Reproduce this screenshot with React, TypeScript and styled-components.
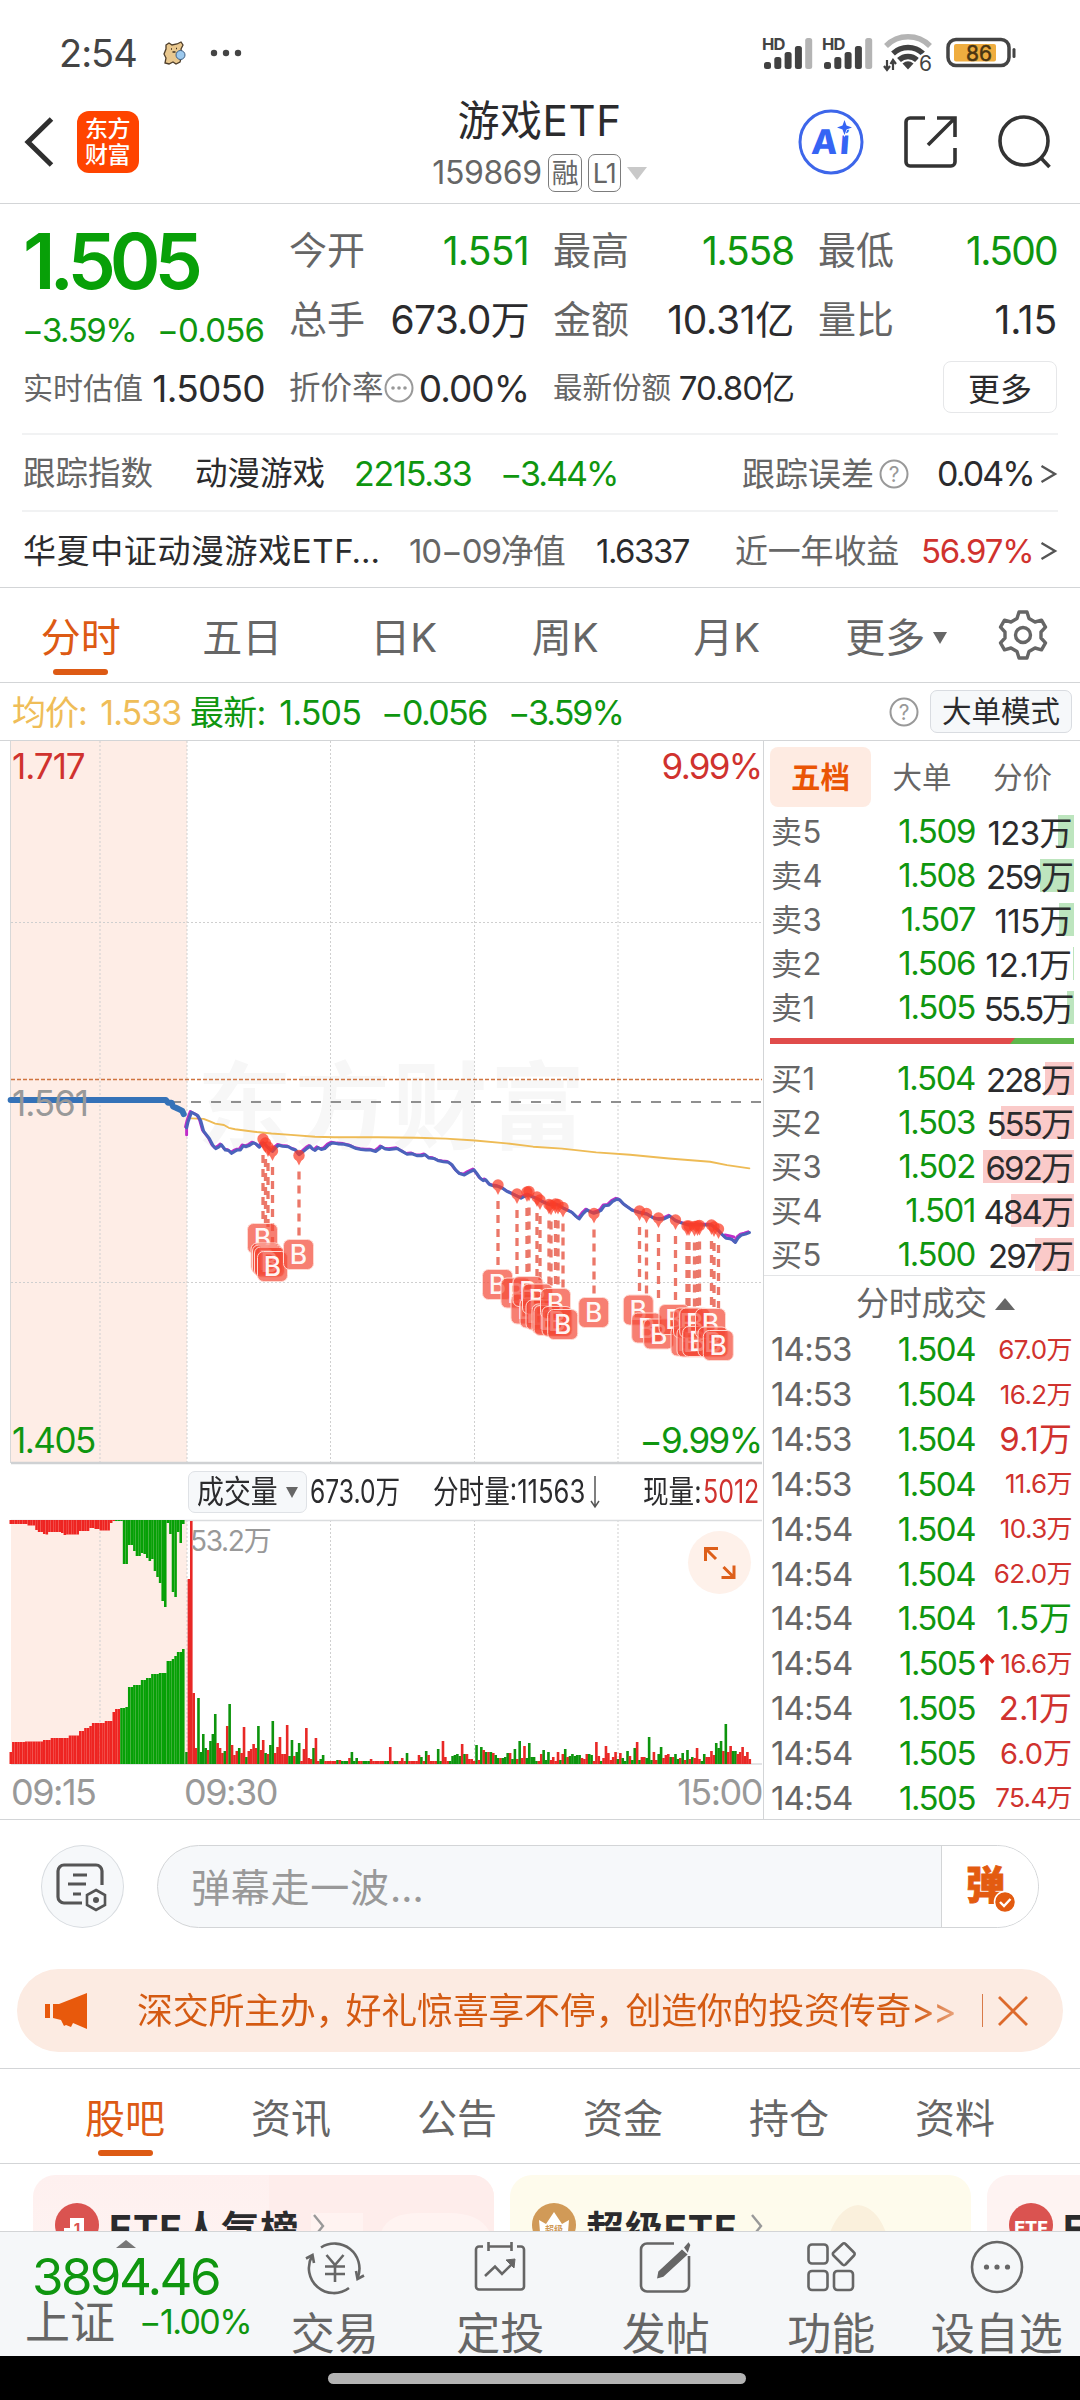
import React from "react";
import styled, { createGlobalStyle, css } from "styled-components";

const C = {
  green: "#0f960f",
  red: "#d0322e",
  orange: "#dd5a14",
  ink: "#2b2b2d",
  label: "#666666",
  faint: "#999999",
  line: "#d3d5d7",
  hair: "#f1f2f3",
  wash: "#f6f8fa",
  blush: "#feede6",
};

const Global = createGlobalStyle`
  * { box-sizing: border-box; }
  body {
    margin: 0;
    background: #fff;
    font-family: "Inter", "Noto Sans CJK SC", sans-serif;
    line-height: 1;
    color: ${C.ink};
  }
  svg { display: block; flex: none; overflow: visible; }
`;

const Page = styled.div`
  width: 1080px;
  height: 2400px;
  display: flex;
  flex-direction: column;
  overflow: hidden;
  background: #fff;
  white-space: nowrap;
`;

/* ---------- text kinds ---------- */
type Txt = { $c?: string; $s?: number; $ls?: number };
const Label = styled.span<Txt>`
  font-size: ${(p) => p.$s ?? 38}px;
  letter-spacing: ${(p) => p.$ls ?? 0}px;
  color: ${(p) => p.$c ?? C.label};
`;
const Value = styled.span<Txt>`
  font-size: ${(p) => p.$s ?? 39}px;
  letter-spacing: ${(p) => p.$ls ?? -1}px;
  color: ${(p) => p.$c ?? C.ink};
`;

/* ---------- status bar ---------- */
const StatusBar = styled.header`
  height: 80px;
  padding: 25px 64px 0 59px;
  display: flex;
  justify-content: space-between;
`;
const StatusSide = styled.div`
  display: flex;
  align-items: center;
  height: 55px;
`;
const Clock = styled.span`
  font-size: 38px;
  letter-spacing: -1px;
  color: #444;
  width: 104px;
`;
const Gap = styled.i<{ $w: number }>`
  flex: none;
  width: ${(p) => p.$w}px;
`;

const Signal = () => (
  <svg width="60" height="36" viewBox="0 0 60 36">
    <text x="0" y="14.500" fontSize="16.500" fontWeight="700" fill="#444" letterSpacing="-0.800">HD</text>
    {[27, 22, 17, 11, 3].map((y, i) => (
      <rect key={i} x={2 + i * 10.3} y={y} width="7" height={34 - y} rx="2.500" fill={i === 4 ? "#b4b4b4" : "#414141"} />
    ))}
  </svg>
);
const Wifi = () => (
  <svg width="50" height="38" viewBox="0 0 50 38">
    <g fill="none" strokeWidth="5.500">
      <path d="M2 12A31 31 0 0 1 46 12" stroke="#b4b4b4" />
      <path d="M9 19.5A22 22 0 0 1 39 19.5" stroke="#414141" />
      <path d="M15 26A13 13 0 0 1 33 26" stroke="#414141" />
    </g>
    <path d="M18.500 29.500Q24 25 29.500 29.500L24 35.500Z" fill="#414141" />
    <path d="M3 26v9M0 32l3 4 3-4M9 36v-9M6.500 30L9 26l3 4" stroke="#414141" strokeWidth="2.200" fill="none" />
    <text x="35" y="37" fontSize="21" fill="#444" stroke="#fff" strokeWidth="4" paintOrder="stroke">6</text>
  </svg>
);
const Battery = () => (
  <svg width="70" height="32" viewBox="0 0 70 32">
    <rect x="2" y="2.500" width="61" height="26" rx="8" fill="#fff" stroke="#444" strokeWidth="3.500" />
    <rect x="8" y="7" width="42" height="17.500" rx="2" fill="#efad3f" />
    <rect x="66.500" y="11" width="3" height="10" rx="1.500" fill="#444" />
    <text x="33" y="23.500" fontSize="21" fill="#4a3512" stroke="#4a3512" strokeWidth="0.500" textAnchor="middle">86</text>
  </svg>
);
const Bear = () => (
  <svg width="24" height="24" viewBox="0 0 24 24">
    <path d="M3 4l3-2 3 2 5-1 4-2 2 3-2 4 1 6-2 7-4 2-3-2-4 2-4-1 1-5-2-4 2-5z" fill="#e9c88f" stroke="#4d3d2a" strokeWidth="1.300" />
    <path d="M8 8h1M13 7.500h1M9.500 11h3" stroke="#3f3020" strokeWidth="1.500" />
    <circle cx="17.500" cy="14" r="4.500" fill="#9cc9ee" stroke="#3e5e84" strokeWidth="1" />
  </svg>
);

/* ---------- title bar ---------- */
const TitleBar = styled.div`
  height: 124px;
  padding: 0 29px 0 23px;
  display: grid;
  grid-template-columns: 1fr auto 1fr;
  align-items: center;
  border-bottom: 1px solid ${C.line};
`;
const Side = styled.div<{ $end?: boolean }>`
  display: flex;
  align-items: center;
  gap: ${(p) => (p.$end ? 41 : 23)}px;
  justify-content: ${(p) => (p.$end ? "flex-end" : "flex-start")};
`;
const Logo = styled.div`
  width: 62px;
  height: 62px;
  border-radius: 12px;
  background: #ff4400;
  color: #fff;
  font-size: 23px;
  font-weight: 500;
  line-height: 26px;
  letter-spacing: -0.5px;
  white-space: normal;
  padding: 5px 4px 0 8px;
`;
const TitleCol = styled.div`
  display: flex;
  flex-direction: column;
  align-items: center;
  padding: 11px 0 0 5px;
`;
const Title = styled.h1`
  margin: 0;
  font-size: 42px;
  line-height: 52px;
  font-weight: 400;
  letter-spacing: 0.6px;
`;
const Sub = styled.div`
  display: flex;
  align-items: center;
  gap: 6px;
  height: 53px;
  font-size: 32px;
  letter-spacing: -0.4px;
  color: ${C.label};
`;
const Badge = styled.span<{ $w: number }>`
  width: ${(p) => p.$w}px;
  height: 38px;
  border: 1.500px solid #7c7c7c;
  border-radius: 7px;
  display: grid;
  place-items: center;
  font-size: 27px;
  letter-spacing: -1px;
`;
const Tri = styled.i<{ $w: number; $h: number; $c: string; $up?: boolean }>`
  display: block;
  flex: none;
  width: 0;
  height: 0;
  border: solid transparent;
  border-width: 0 ${(p) => p.$w / 2}px;
  ${(p) =>
    p.$up
      ? css`border-bottom: ${p.$h}px solid ${p.$c};`
      : css`border-top: ${p.$h}px solid ${p.$c};`}
`;

/* ---------- quote panel ---------- */
const Quote = styled.section`
  height: 231px;
  margin: 0 22px;
  padding: 12px 0 0 1px;
  border-bottom: 2px solid ${C.hair};
  display: grid;
  grid-template-columns: 242px 240px 241px 239px;
  grid-template-rows: 68px 70px 68px;
  column-gap: 24px;
`;
const PriceBox = styled.div`
  grid-row: span 2;
  display: flex;
  flex-direction: column;
`;
const BigPrice = styled.div`
  font-size: 77px;
  font-weight: 600;
  letter-spacing: -6px;
  line-height: 91px;
  margin-left: 0;
  color: #08a008;
`;
const Deltas = styled.div`
  display: flex;
  gap: 21px;
  margin-left: -1px;
  line-height: 46px;
`;
const Cell = styled.div`
  display: flex;
  align-items: center;
  justify-content: space-between;
`;
const MoreCell = styled(Cell)`
  justify-content: flex-end;
`;
const MoreButton = styled.button`
  width: 114px;
  height: 52px;
  margin-top: -3px;
  border: 1.500px solid #e6e7e9;
  border-radius: 8px;
  background: #fff;
  font: 32px "Noto Sans CJK SC", sans-serif;
  line-height: 1;
  color: ${C.ink};
  padding: 0;
`;
const InfoLine = styled.section<{ $cols: string; $last?: boolean }>`
  height: ${(p) => (p.$last ? 75 : 77)}px;
  padding: 3px 0 0 1px;
  margin: 0 22px;
  display: grid;
  grid-template-columns: ${(p) => p.$cols};
  align-items: center;
  border-bottom: ${(p) => (p.$last ? "0" : `2px solid ${C.hair}`)};
`;
const WithIcon = styled.span`
  display: flex;
  align-items: center;
`;

const Hint = ({ mark }: { mark: "?" | "…" }) => (
  <svg width="30" height="30" viewBox="0 0 30 30">
    <circle cx="15" cy="15" r="13.500" fill="none" stroke="#999" strokeWidth="2" />
    {mark === "?" ? (
      <text x="15" y="22.500" fontSize="21" fill="#999" textAnchor="middle">?</text>
    ) : (
      [9, 15, 21].map((x) => <circle key={x} cx={x} cy="15" r="1.800" fill="#999" />)
    )}
  </svg>
);
const Arrow = () => (
  <svg width="17" height="20" viewBox="0 0 17 20">
    <path d="M1.500 2L15 10 1.500 18" fill="none" stroke="#555" strokeWidth="2.400" />
  </svg>
);

/* ---------- tabs ---------- */
const Tabs = styled.nav<{ $first?: boolean }>`
  height: 95px;
  display: grid;
  grid-template-columns: ${(p) => (p.$first ? "repeat(6, 161.500px) 1fr" : "repeat(6, 166px)")};
  padding-left: ${(p) => (p.$first ? 0 : 42)}px;
  border-top: 1px solid ${C.line};
`;
const TabItem = styled.div<{ $on?: boolean }>`
  display: flex;
  flex-direction: column;
  align-items: center;
  padding-top: 28px;
  font-size: 40px;
  line-height: 44px;
  color: ${(p) => (p.$on ? C.orange : C.label)};
  &::after {
    content: "";
    width: 55px;
    height: 6px;
    margin-top: 9px;
    border-radius: 3px;
    background: ${(p) => (p.$on ? C.orange : "transparent")};
  }
`;
const TabText = styled.span`
  display: flex;
  align-items: center;
  gap: 8px;
`;
const GearBox = styled.div`
  padding: 22px 0 0 30px;
`;

const AvgBar = styled.section`
  height: 58px;
  padding: 0 8px 0 12px;
  display: flex;
  align-items: center;
  border-top: 1px solid ${C.line};
`;
const AvgItem = styled(Value)<{ $w: number }>`
  width: ${(p) => p.$w}px;
  padding-top: 3px;
  word-spacing: 5px;
`;
const ModeButton = styled.div`
  margin-left: 11px;
  width: 142px;
  height: 43px;
  border: 1.500px solid #d9dce1;
  border-radius: 7px;
  background: ${C.wash};
  display: grid;
  place-items: center;
  font-size: 29.500px;
`;
const Push = styled.span`
  flex: 1;
`;

/* ---------- market area ---------- */
const Market = styled.section`
  height: 1080px;
  display: flex;
  border-top: 1px solid ${C.line};
  border-bottom: 1px solid ${C.line};
`;
const Charts = styled.div`
  width: 763px;
  display: flex;
  flex-direction: column;
`;
const VolHead = styled.div`
  height: 56px;
  padding: 0 0 0 188px;
  display: flex;
  align-items: center;
`;
const VolPick = styled.div`
  width: 119px;
  height: 42px;
  margin-right: 3px;
  border: 1.500px solid #dfe2e6;
  border-radius: 7px;
  background: ${C.wash};
  display: flex;
  align-items: center;
  padding-left: 8px;
`;
const Narrow = styled.span<{ $w: number; $k: number; $c?: string }>`
  width: ${(p) => p.$w}px;
  font-size: 32px;
  color: ${(p) => p.$c ?? C.ink};
  transform: scaleX(${(p) => p.$k});
  transform-origin: left;
`;
const VolBody = styled.div`
  position: relative;
  height: 245px;
`;
const Expand = styled.div`
  position: absolute;
  left: 688px;
  top: 11px;
`;
const Times = styled.div`
  height: 54px;
  display: grid;
  grid-template-columns: 173px 1fr auto;
  padding: 0 1px 0 11px;
  align-items: center;
  font-size: 36px;
  letter-spacing: -1.500px;
  color: ${C.faint};
`;

const BookSide = styled.aside`
  width: 317px;
  border-left: 1px solid ${C.line};
  display: flex;
  flex-direction: column;
`;
const BookTabs = styled.div`
  flex: none;
  height: 68px;
  padding: 6px 0 0 6px;
  display: grid;
  grid-template-columns: 101px 102px 99px;
`;
const BookTab = styled.div<{ $on?: boolean }>`
  height: 60px;
  padding-top: 2px;
  border-radius: 8px;
  display: grid;
  place-items: center;
  font-size: 29.500px;
  font-weight: ${(p) => (p.$on ? 700 : 400)};
  color: ${(p) => (p.$on ? "#ea5504" : C.label)};
  background: ${(p) => (p.$on ? "#feebe2" : "transparent")};
`;
const BookRow = styled.div`
  flex: none;
  height: 44px;
  padding: 0 6px 0 7px;
  display: grid;
  grid-template-columns: 90px 114px 1fr;
  align-items: center;
  text-align: right;
  & > :first-child {
    text-align: left;
  }
`;
const VolCell = styled.span<{ $bar: number; $c: string }>`
  height: 33px;
  line-height: 36px;
  padding-right: 2px;
  background: linear-gradient(${(p) => p.$c}, ${(p) => p.$c}) right / ${(p) => p.$bar}px 100% no-repeat;
`;
const Ratio = styled.div`
  flex: none;
  height: 6px;
  margin: 9px 6px 12px 6px;
  background: #5fb74b;
  &::before {
    content: "";
    display: block;
    width: 245px;
    height: 6px;
    background: #e04c4b;
    clip-path: polygon(0 0, 100% 0, calc(100% - 5px) 100%, 0 100%);
  }
`;
const TradeHead = styled.div`
  flex: none;
  height: 52.500px;
  margin-top: -1px;
  border-top: 1px solid #e3e4e6;
  display: flex;
  align-items: center;
  gap: 8px;
  padding: 4px 0 0 92px;
`;
const TradeRow = styled(BookRow)`
  height: 44.850px;
`;
const Tick = styled.span`
  display: flex;
  align-items: center;
  justify-content: space-between;
  padding-right: 2px;
`;

/* ---------- danmaku + banner ---------- */
const Danmaku = styled.section`
  padding: 25px 41px 0;
  height: 149px;
  display: flex;
  gap: 33px;
`;
const Round = styled.div`
  width: 83px;
  height: 83px;
  border-radius: 50%;
  border: 1.500px solid #d8dce0;
  background: ${C.wash};
  display: grid;
  place-items: center;
`;
const Field = styled.div`
  width: 883px;
  height: 83px;
  border: 1.500px solid ${C.line};
  border-radius: 42px;
  overflow: hidden;
  display: flex;
  background: ${C.wash};
`;
const Placeholder = styled.span`
  flex: 1;
  padding-left: 33px;
  font-size: 39px;
  letter-spacing: 0.800px;
  line-height: 83px;
  color: ${C.faint};
`;
const Send = styled.div`
  width: 97px;
  border-left: 1px solid ${C.line};
  background: #fff;
  padding: 19px 0 0 24px;
`;
const Banner = styled.section`
  margin: 0 17px 16px;
  height: 83px;
  border-radius: 42px;
  background: #fcebe2;
  display: flex;
  align-items: center;
  padding: 0 34px 0 28px;
`;
const BannerText = styled.span`
  margin-left: 49px;
  width: 846px;
  font-size: 36px;
  letter-spacing: -0.300px;
  background: linear-gradient(90deg, #d45a12 0 92%, #e9a57f 97%);
  background-clip: text;
  color: transparent;
  line-height: 50px;
`;
const Comma = styled.span`
  letter-spacing: -6px;
`;
const Chevrons = styled.span`
  letter-spacing: -2px;
`;
const Bar = styled.i`
  width: 1.500px;
  height: 33px;
  background: #d97a48;
  margin-right: 14px;
`;

/* ---------- cards ---------- */
const Cards = styled.section`
  height: 68px;
  border-top: 1px solid ${C.line};
  padding: 11px 0 0 33px;
  display: flex;
  gap: 16px;
  overflow: hidden;
`;
const Card = styled.div<{ $bg: string }>`
  position: relative;
  isolation: isolate;
  flex: none;
  width: 461px;
  height: 160px;
  border-radius: 22px;
  background: ${(p) => p.$bg};
  display: flex;
  align-items: flex-start;
  padding: 28px 0 0 22px;
  overflow: hidden;
`;
const Ghost = styled.div`
  position: absolute;
  z-index: -1;
  right: 0;
  top: 0;
`;
const CardTitle = styled.span`
  font-size: 38px;
  font-weight: 700;
  line-height: 54px;
  margin: -1px 14px 0 10px;
  letter-spacing: 0.900px;
`;

/* ---------- bottom bar ---------- */
const Bottom = styled.nav`
  height: 125px;
  background: #f5f7f9;
  border-top: 1.500px solid ${C.line};
  display: grid;
  grid-template-columns: 252px repeat(5, 165.500px);
  overflow: hidden;
`;
const IndexBox = styled.div`
  display: flex;
  flex-direction: column;
`;
const IndexTri = styled.div`
  padding: 8px 0 0 116px;
  height: 19px;
`;
const IndexValue = styled.div`
  font-size: 51px;
  letter-spacing: -2.600px;
  line-height: 52px;
  padding-left: 32px;
  color: ${C.green};
`;
const IndexRow = styled.div`
  display: flex;
  align-items: center;
  padding-left: 25px;
  height: 38px;
  gap: 24px;
`;
const NavItem = styled.div`
  display: flex;
  flex-direction: column;
  align-items: center;
  padding-top: 8px;
  font-size: 44px;
  color: ${C.label};
  gap: 17px;
  line-height: 46px;
`;
const Home = styled.footer`
  height: 44px;
  background: #000;
  display: flex;
  justify-content: center;
  padding: 17px 6px 0 0;
`;
const Handle = styled.i`
  width: 418px;
  height: 11px;
  border-radius: 6px;
  background: #b3b3b3;
`;

/* ---------- chart data ---------- */
const PRICE =
  "385,843 388,830 395,810 408,817 414,828 420,850 426,858 432,866 439,880 445,887 451,884 457,879 465,890 472,891 478,897 484,893 490,890 496,890 502,881 508,883 515,880 522,875 528,877 535,884 540,878 545,876 552,884 562,893 570,884 575,880 583,882 595,883 603,888 610,890 617,900 626,893 634,886 640,882 645,888 650,891 656,885 663,889 670,887 678,879 686,875 697,877 710,878 722,881 735,887 745,889 755,890 765,890 775,893 782,888 787,883 795,888 803,889 812,888 820,887 828,892 840,899 850,898 860,902 870,902 877,900 885,907 895,908 905,913 915,915 925,916 933,922 940,932 948,940 958,943 966,938 978,932 984,940 990,949 997,955 1002,953 1010,963 1018,966 1027,967 1037,971 1045,977 1055,982 1067,988 1075,992 1083,988 1090,985 1100,990 1110,994 1120,1000 1133,1006 1150,1006 1165,1015 1180,1022 1188,1030 1195,1036 1203,1025 1211,1017 1218,1021 1225,1024 1232,1022 1240,1018 1247,1008 1256,1007 1264,999 1273,994 1279,996 1287,1005 1295,1011 1305,1018 1320,1023 1335,1026 1348,1034 1358,1037 1370,1036 1382,1030 1394,1040 1407,1045 1420,1049 1440,1049 1468,1049 1482,1060 1490,1069 1498,1077 1506,1078 1511,1080 1517,1086 1523,1076 1530,1070 1538,1068 1546,1065";
const AVERAGE =
  "395,823 420,824 432,829 444,834 462,837 472,843 485,846 530,852 560,855 600,858 650,862 690,863 780,863 860,864 920,866 980,870 1045,876 1100,883 1160,887 1230,895 1300,900 1380,908 1465,915 1500,922 1546,929";

const DOTS: [number, number][] = [
  [263, 1139], [265.5, 1143], [268, 1147], [272.5, 1151], [299, 1155.5],
  [498, 1185], [517, 1194], [527, 1192], [529, 1191.5], [537, 1197], [540, 1200], [549, 1204.5], [551, 1205.5], [555.5, 1204], [558, 1204.5], [563, 1207.5], [594, 1213.5],
  [639.5, 1211], [646.5, 1213.500], [658.5, 1218], [675.5, 1220], [687, 1226], [689, 1226], [694.500, 1226.500], [697.500, 1226], [699.500, 1225.500], [711.500, 1225], [714, 1227], [718.500, 1229],
];
const FLAGS: [number, number][] = [
  [262.5, 1238.5], [266, 1258], [267.5, 1260], [269.5, 1262], [272.5, 1266.5], [298.5, 1254.5],
  [497.5, 1284.5], [516, 1293], [526, 1309], [528, 1291.5], [535, 1313], [537.500, 1299], [541, 1315], [547, 1319], [549, 1320.500], [555.500, 1303.500], [557, 1321.500], [562.700, 1324.500], [593.700, 1312.500],
  [638.300, 1310], [646.700, 1328], [658.700, 1334], [674, 1319.500], [686, 1341], [688.500, 1323], [692, 1342], [694.700, 1323], [697.700, 1341.500], [710.500, 1323.500], [713, 1342], [718.300, 1345.500],
];

const VOLUME =
  "g12 r185 r243 r71 r16 g66 g12 g30 g16 r14 g23 g30 g50 r21 r16 r11 g13 r38 g60 r19 r9 r13 g16 r11 r37 g7 r13 r15 r20 r16 g38 r14 r24 g11 r10 g19 g43 r11 r17 r27 r10 r10 r39 g8 g24 r8 g12 g21 r3 r15 r36 r6 r5 g16 r26 r3 g5 g9 r3 r3 r3 r3 r3 g4 r4 g3 g3 g3 r6 g12 g3 g6 r3 r3 g3 g3 g3 r5 r3 r3 r3 r3 r3 g3 g3 r17 r3 g3 g3 r3 r6 r3 g11 r3 r3 r3 r3 r9 g7 r3 g13 r9 r3 r3 r3 g15 g3 r23 r7 r3 g3 g8 g9 g10 g8 r20 g10 r10 r5 r5 r3 g19 r4 g17 r14 g12 r12 g12 r11 g9 g6 r6 g6 g7 g11 r11 g5 g15 r5 g23 r6 r18 g6 g21 g7 g7 g3 r3 r10 g14 g4 g12 r4 r7 r3 r12 g4 r10 g15 r7 g8 g10 g8 g9 g9 r6 r5 r10 g10 g9 r3 r22 r8 g3 r6 r18 r11 r4 r7 r12 g5 r11 g6 g3 g13 r8 g4 g16 r22 g4 r7 r7 g6 g27 g4 r12 r4 g10 g17 r6 r9 r10 g7 r7 g10 g5 r6 g11 r4 g14 r5 g7 r6 r16 r5 g3 g10 r7 r7 r13 r9 g21 g16 g23 r13 g40 r12 r18 g13 g13 r10 r12 r17 r8 r12 r5".split(" ");

/* auction bars: r/g, number of bars, height */
const expand = (s: string) =>
  s.split(" ").flatMap((t) => {
    const [k, n, h] = t.split(",");
    return Array.from({ length: +n }, () => ({ up: k === "r", h: +h }));
  });
const AUCTION_TOP = expand(
  "r,7,4 r,3,5.5 r,1,10 r,2,12 r,1,14 r,1,14.5 r,5,12 r,1,13 r,1,15 r,5,14.5 r,1,11 r,3,11 r,2,8 r,2,9 r,4,10.5 r,1,3 r,1,1 g,1,1 g,2,1 g,2,44 g,1,25 g,1,25 g,1,31 g,2,36 g,1,33 g,1,34 g,1,38 g,1,41 g,1,39 g,1,51 g,1,57 g,1,63 g,1,81 g,1,87 g,1,3 g,1,14 g,1,72 g,1,77 g,1,12 g,1,23 g,1,4"
);
const AUCTION_BOTTOM = expand(
  "r,1,12 r,5,22 r,7,22.5 r,3,24 r,7,26 r,4,28.5 r,2,33 r,2,36 r,1,38 r,5,41 r,3,43 r,1,52 r,2,55 g,2,56 g,1,57 g,2,77 g,3,79 g,2,84 g,2,86 g,3,90 g,3,91 g,2,103 g,1,105 g,1,108 g,2,112 g,1,115"
);

const RISE = "#ee2421";
const FALL = "#06a006";
const GRID_X = [100, 187, 330.5, 474.5, 618];

const PriceChart = () => (
  <svg width="763" height="723" viewBox="0 0 763 723">
    <rect x="11" y="0" width="176" height="722" fill={C.blush} />
    <text x="197" y="401" fontSize="95" fontWeight="700" textLength="388" fill="#f7f7f7">东方财富</text>
    <g stroke="#cfcfcf" strokeWidth="1" strokeDasharray="2 2">
      {GRID_X.map((x) => <path key={x} d={`M${x} 0V722`} />)}
      <path d="M11 181.500H762M11 541.500H762" />
    </g>
    <path d="M10.500 0V722" stroke="#d8d8d8" />
    <path d="M11 722H762" stroke="#cfd1d3" strokeWidth="2.500" />
    <path d="M11 338.500H762" stroke="#cf7440" strokeWidth="1.500" strokeDasharray="4 2" />
    <path d="M11 361H762" stroke="#8f8f8f" strokeWidth="2" strokeDasharray="10 10" />
    <g transform="translate(0 -11) scale(0.4847 0.4719)" fill="none" strokeLinejoin="round" strokeLinecap="round">
      <polyline points="22,784 342,784 347,790 354,790 357,798 364,801 370,804 376,807 379,814" stroke="#3572b8" strokeWidth="12.500" />
      <polyline points={AVERAGE} stroke="#eebb55" strokeWidth="4" />
      <polyline points={PRICE} stroke="#c02cc8" strokeWidth="5.500" transform="translate(-2.500 -2)" />
      <path d="M385 858V836M1496 1070L1506 1072 1514 1074" stroke="#c02cc8" strokeWidth="6" />
      <polyline points={PRICE} stroke="#4b63bb" strokeWidth="6.500" />
    </g>
    <g fill="#fb3d27">
      {DOTS.map(([x, y], i) => (
        <g key={i} opacity="0.72">
          <circle cx={x} cy={y - 741} r="5.700" />
          <path d={`M${x - 3} ${y - 737}h6l-3 6z`} />
        </g>
      ))}
    </g>
    <g stroke="#e8604f" strokeWidth="3.300" strokeDasharray="8 6" opacity="0.85">
      {DOTS.map(([x, y], i) => <path key={i} d={`M${x} ${y - 725}V${y - 741 + (i === 3 ? 95 : 83)}`} />)}
    </g>
    {FLAGS.map(([x, y], i) => (
      <g key={i}>
        <rect x={x - 15} y={y - 756} width="30" height="30" rx="6" fill="#f44836" fillOpacity="0.7" stroke="#ffd9d2" strokeWidth="1" />
        <text x={x} y={y - 731.5} fontSize="26.500" fontWeight="500" textAnchor="middle" fill="#fff" fillOpacity="0.95">B</text>
      </g>
    ))}
    <text x="12" y="38" fontSize="35" letterSpacing="-1" fill={C.red}>1.717</text>
    <text x="761.500" y="38" fontSize="35" letterSpacing="-1.700" textAnchor="end" fill={C.red}>9.99%</text>
    <text x="12" y="374.500" fontSize="35" letterSpacing="-1" fill="#999">1.561</text>
    <text x="12" y="712" fontSize="35" letterSpacing="-1.500" fill={C.green}>1.405</text>
    <text x="761.500" y="712" fontSize="35" letterSpacing="-1.600" textAnchor="end" fill={C.green}>−9.99%</text>
  </svg>
);

const VolumeChart = () => (
  <svg width="763" height="245" viewBox="0 0 763 245">
    <rect x="11" y="0" width="176" height="244" fill={C.blush} />
    <g stroke="#cfcfcf" strokeDasharray="2 2">
      {GRID_X.map((x) => <path key={x} d={`M${x} 0V244`} />)}
    </g>
    <path d="M11 .5H762M11 244H762" stroke="#dadcde" strokeWidth="1.500" />
    {AUCTION_TOP.map((b, i) => (
      <rect key={i} x={9.5 + i * 2.575} y="0" width="2.550" height={b.h} fill={b.up ? RISE : FALL} />
    ))}
    {AUCTION_BOTTOM.map((b, i) => (
      <rect key={i} x={9.5 + i * 2.575} y={244 - b.h} width="2.550" height={b.h} fill={b.up ? RISE : FALL} />
    ))}
    {VOLUME.map((t, i) => {
      const h = +t.slice(1);
      return <rect key={i} x={185.2 + i * 2.397} y={244 - h} width="2.600" height={h} fill={t[0] === "r" ? "#e82826" : "#0d940d"} />;
    })}
    <text x="190" y="31" fontSize="28" letterSpacing="-1.300" fill="#999">53.2万</text>
  </svg>
);

/* ---------- order book ---------- */
const ASKS: [string, string, string, number][] = [
  ["卖5", "1.509", "123万", 16], ["卖4", "1.508", "259万", 34], ["卖3", "1.507", "115万", 15], ["卖2", "1.506", "12.1万", 1], ["卖1", "1.505", "55.5万", 7],
];
const BIDS: [string, string, string, number][] = [
  ["买1", "1.504", "228万", 29], ["买2", "1.503", "555万", 73], ["买3", "1.502", "692万", 91], ["买4", "1.501", "484万", 63], ["买5", "1.500", "297万", 39],
];
const TRADES: [string, string, string, number, boolean?][] = [
  ["14:53", "1.504", "67.0万", 26], ["14:53", "1.504", "16.2万", 26], ["14:53", "1.504", "9.1万", 33], ["14:53", "1.504", "11.6万", 26],
  ["14:54", "1.504", "10.3万", 26], ["14:54", "1.504", "62.0万", 26], ["14:54", "1.504", "1.5万", 33], ["14:54", "1.505", "16.6万", 26, true],
  ["14:54", "1.505", "2.1万", 33], ["14:54", "1.505", "6.0万", 29], ["14:54", "1.505", "75.4万", 26],
];

const spacing = (v: string) => {
  const narrow = v[0] === "1";
  if (v.includes(".")) return narrow ? 0 : -2.6;
  return narrow ? -0.6 : -1.9;
};

const Book = ({ rows, tint }: { rows: typeof ASKS; tint: string }) => (
  <>
    {rows.map(([n, p, v, b]) => (
      <BookRow key={n}>
        <Label $s={31} $ls={0.5}>{n}</Label>
        <Value $s={33} $ls={-1.4} $c={C.green}>{p}</Value>
        <VolCell $bar={b} $c={tint}>
          <Value $s={33} $ls={spacing(v)}>{v}</Value>
        </VolCell>
      </BookRow>
    ))}
  </>
);

/* ---------- bottom icons ---------- */
const icon = { width: 60, height: 54, viewBox: "0 0 60 54", fill: "none", stroke: "#666", strokeWidth: 2.6 };
const NAV = [
  {
    t: "交易",
    i: (
      <svg {...icon}>
        <path d="M16 7.500A25 25 0 0 1 53 37M44 48A25 25 0 0 1 7 16" />
        <path d="M1 18.500L7.500 15 9 23M59 35.500L52.500 39 51 31" />
        <path d="M21.500 15l8.500 10 8.500-10M30 25v17M20 26.500h20M20 34h20" />
      </svg>
    ),
  },
  {
    t: "定投",
    i: (
      <svg {...icon}>
        <path d="M13 6.500H9a3 3 0 0 0-3 3v37a3 3 0 0 0 3 3h42a3 3 0 0 0 3-3v-37a3 3 0 0 0-3-3h-4M18.500 2v9M41.500 2v9M18.500 6.500h23" />
        <path d="M15 36l10-9.500 7 7.500L44 22" />
        <path d="M36 20l9-1-1 9z" fill="#666" strokeWidth="1" />
      </svg>
    ),
  },
  {
    t: "发帖",
    i: (
      <svg {...icon}>
        <path d="M38 3.500H11a6 6 0 0 0-6 6v36a6 6 0 0 0 6 6h36a6 6 0 0 0 6-6V16" />
        <path d="M46 10.500L50.500 14.500 27 36l-5 1.500L23 32z" fill="#666" strokeWidth="1.500" />
        <path d="M49 7.500l3.500-4 1 1.500-2 6z" fill="#666" strokeWidth="1.500" />
      </svg>
    ),
  },
  {
    t: "功能",
    i: (
      <svg {...icon}>
        <rect x="7.500" y="4.500" width="19" height="19" rx="3.500" />
        <rect x="7.500" y="31" width="19" height="19" rx="3.500" />
        <rect x="33" y="31" width="19" height="19" rx="3.500" />
        <path d="M41.500 4L32.500 12.500a2 2 0 0 0 0 3L41.500 24.500a2 2 0 0 0 3 0L53 15.500a2 2 0 0 0 0-3L44.500 4a2 2 0 0 0-3 0z" />
      </svg>
    ),
  },
  {
    t: "设自选",
    i: (
      <svg {...icon}>
        <circle cx="30" cy="27" r="25" />
        {[19.500, 30, 40.500].map((x) => <circle key={x} cx={x} cy="27" r="2.600" fill="#666" stroke="none" />)}
      </svg>
    ),
  },
];

export default function App() {
  return (
    <Page>
      <Global />
      <StatusBar>
        <StatusSide>
          <Clock>2:54</Clock>
          <Bear />
          <svg width="60" height="10" viewBox="0 0 60 10">
            {[27, 39, 51].map((x) => <circle key={x} cx={x} cy="5" r="3.200" fill="#444" />)}
          </svg>
        </StatusSide>
        <StatusSide>
          <Signal />
          <Signal />
          <Gap $w={2} />
          <Wifi />
          <Gap $w={12} />
          <Battery />
        </StatusSide>
      </StatusBar>

      <TitleBar>
        <Side>
          <svg width="31" height="50" viewBox="0 0 31 50">
            <path d="M28.500 2L5 25 28.500 48" fill="none" stroke="#2f2f2f" strokeWidth="5" />
          </svg>
          <Logo>东方财富</Logo>
        </Side>
        <TitleCol>
          <Title>游戏ETF</Title>
          <Sub>
            159869
            <Badge $w={34}>融</Badge>
            <Badge $w={33}>L1</Badge>
            <Tri $w={20} $h={13} $c="#c9c9c9" />
          </Sub>
        </TitleCol>
        <Side $end>
          <svg width="66" height="66" viewBox="0 0 66 66">
            <circle cx="34" cy="33" r="31" fill="none" stroke="#3d66ea" strokeWidth="3" />
            <text x="14" y="45" fontSize="34" fontWeight="800" fill="#3564f4" transform="translate(3 0) skewX(-4)" textLength="38">Ai</text>
            <path d="M47.500 11l2 5.500 5.500 2-5.500 2-2 5.500-2-5.500-5.500-2 5.500-2z" fill="#3564f4" stroke="#fff" strokeWidth="1.500" paintOrder="stroke" />
          </svg>
          <svg width="53" height="54" viewBox="0 0 53 54" fill="none" stroke="#333" strokeWidth="3.600">
            <path d="M21 3H6a4 4 0 0 0-4 4v40a4 4 0 0 0 4 4h41a4 4 0 0 0 4-4V33M33 3h18v19M50 4L24 30" />
          </svg>
          <svg width="53" height="54" viewBox="0 0 53 54" fill="none" stroke="#333" strokeWidth="3.600">
            <circle cx="26" cy="26" r="24" />
            <path d="M42 42l9.500 10" />
          </svg>
        </Side>
      </TitleBar>

      <Quote>
        <PriceBox>
          <BigPrice>1.505</BigPrice>
          <Deltas>
            <Value $s={33} $ls={-1.5} $c={C.green}>−3.59%</Value>
            <Value $s={33} $ls={-0.8} $c={C.green}>−0.056</Value>
          </Deltas>
        </PriceBox>
        <Cell><Label>今开</Label><Value $c={C.green} $ls={-0.7}>1.551</Value></Cell>
        <Cell><Label>最高</Label><Value $c={C.green} $ls={-1.2}>1.558</Value></Cell>
        <Cell><Label>最低</Label><Value $c={C.green} $ls={-1.7}>1.500</Value></Cell>
        <Cell><Label>总手</Label><Value $ls={-0.7}>673.0万</Value></Cell>
        <Cell><Label>金额</Label><Value $ls={-0.3}>10.31亿</Value></Cell>
        <Cell><Label>量比</Label><Value $ls={-0.2}>1.15</Value></Cell>
        <Cell><Label $s={30}>实时估值</Label><Value $s={37} $ls={-0.7}>1.5050</Value></Cell>
        <Cell>
          <WithIcon><Label $s={31.5}>折价率</Label><Hint mark="…" /></WithIcon>
          <Value $s={37} $ls={-1}>0.00%</Value>
        </Cell>
        <Cell><Label $s={29.5}>最新份额</Label><Value $s={33} $ls={-1}>70.80亿</Value></Cell>
        <MoreCell><MoreButton>更多</MoreButton></MoreCell>
      </Quote>

      <InfoLine $cols="172px 159px 146px 1fr auto 103px 18px">
        <Label $s={32.5}>跟踪指数</Label>
        <Value $s={32.5} $ls={0}>动漫游戏</Value>
        <Value $s={34} $ls={-1.2} $c={C.green}>2215.33</Value>
        <Value $s={34} $ls={-2} $c={C.green}>−3.44%</Value>
        <WithIcon><Label $s={33}>跟踪误差</Label><Gap $w={5} /><Hint mark="?" /><Gap $w={28} /></WithIcon>
        <Value $s={34} $ls={-1.9}>0.04%</Value>
        <Arrow />
      </InfoLine>
      <InfoLine $last $cols="386px 187px 1fr auto 119px 18px">
        <Value $s={33} $ls={0.6}>华夏中证动漫游戏ETF…</Value>
        <Label $s={33} $ls={-1.1}>10−09净值</Label>
        <Value $s={33} $ls={-1.5}>1.6337</Value>
        <WithIcon><Label $s={33} $ls={-0.2}>近一年收益</Label><Gap $w={22} /></WithIcon>
        <Value $s={33} $ls={-1.2} $c={C.red}>56.97%</Value>
        <Arrow />
      </InfoLine>

      <Tabs $first>
        <TabItem $on><TabText>分时</TabText></TabItem>
        <TabItem><TabText>五日</TabText></TabItem>
        <TabItem><TabText>日K</TabText></TabItem>
        <TabItem><TabText>周K</TabText></TabItem>
        <TabItem><TabText>月K</TabText></TabItem>
        <TabItem><TabText><Gap $w={8} />更多<Tri $w={14} $h={12} $c="#666" /></TabText></TabItem>
        <GearBox>
          <svg width="48" height="50" viewBox="0 0 48 50" fill="none" stroke="#666" strokeWidth="3.400" strokeLinejoin="round">
            <path d="M20 2h8l2 6.500 6 3.500 6.500-1.800 4 7L42 22v6l4.500 4.800-4 7L36 38l-6 3.500L28 48h-8l-2-6.500L12 38l-6.500 1.800-4-7L6 28v-6l-4.500-4.800 4-7L12 12l6-3.500z" />
            <circle cx="24" cy="25" r="7.500" />
          </svg>
        </GearBox>
      </Tabs>

      <AvgBar>
        <AvgItem $w={178} $s={34} $ls={-1} $c="#efbd58">均价: 1.533</AvgItem>
        <AvgItem $w={191} $s={34} $ls={-0.8} $c={C.green}>最新: 1.505</AvgItem>
        <AvgItem $w={127} $s={34} $ls={-1.6} $c={C.green}>−0.056</AvgItem>
        <AvgItem $w={120} $s={34} $ls={-2} $c={C.green}>−3.59%</AvgItem>
        <Push />
        <Hint mark="?" />
        <ModeButton>大单模式</ModeButton>
      </AvgBar>

      <Market>
        <Charts>
          <PriceChart />
          <VolHead>
            <VolPick><Narrow $w={89} $k={0.84}>成交量</Narrow><Tri $w={13} $h={11} $c="#666" /></VolPick>
            <Narrow $w={123} $k={0.77}>673.0万</Narrow>
            <Narrow $w={156} $k={0.8}>分时量:11563</Narrow>
            <svg width="12" height="34" viewBox="0 0 12 34"><path d="M6 1v31M2 26l4 6 4-6" fill="none" stroke="#555" strokeWidth="1.500" /></svg>
            <Gap $w={42} />
            <Narrow $w={60} $k={0.8}>现量:</Narrow>
            <Narrow $w={56} $k={0.78} $c={C.red}>5012</Narrow>
          </VolHead>
          <VolBody>
            <VolumeChart />
            <Expand>
              <svg width="63" height="63" viewBox="0 0 63 63" fill="none" stroke="#dd5f1a" strokeWidth="3">
                <circle cx="31.500" cy="31.500" r="31.500" fill="#fef1ea" stroke="none" />
                <path d="M17.500 30V17.500H30M17.500 17.500L28 28M46 34.500V46.500H33.500M46 46.500L35.500 36" />
              </svg>
            </Expand>
          </VolBody>
          <Times><span>09:15</span><span>09:30</span><span>15:00</span></Times>
        </Charts>

        <BookSide>
          <BookTabs>
            <BookTab $on>五档</BookTab>
            <BookTab>大单</BookTab>
            <BookTab>分价</BookTab>
          </BookTabs>
          <Book rows={ASKS} tint="#bde5be" />
          <Ratio />
          <Book rows={BIDS} tint="#facac9" />
          <TradeHead><Label $s={33} $ls={-0.3}>分时成交</Label><Tri $up $w={21} $h={12} $c="#666" /></TradeHead>
          {TRADES.map(([t, p, v, s, up], i) => (
            <TradeRow key={i}>
              <Label $s={33} $ls={-0.8}>{t}</Label>
              <Value $s={33} $ls={-1.5} $c={C.green}>{p}</Value>
              <Tick>
                {up ? (
                  <svg width="18" height="24" viewBox="0 0 18 24"><path d="M12 23V4M5.500 10.500L12 4l6.500 6.500" fill="none" stroke="#d8201c" strokeWidth="3.200" /></svg>
                ) : <span />}
                <Value $s={s} $ls={s === 26 ? -0.6 : 0} $c={v === "1.5万" ? C.green : C.red}>{v}</Value>
              </Tick>
            </TradeRow>
          ))}
        </BookSide>
      </Market>

      <Danmaku>
        <Round>
          <svg width="52" height="48" viewBox="0 0 52 48" fill="none" stroke="#555" strokeWidth="3.200">
            <path d="M26 40H8a6 6 0 0 1-6-6V8a6 6 0 0 1 6-6h32a6 6 0 0 1 6 6v14M17 12h14M12 21h18M17 31h8" />
            <path d="M40 27l9 5v10l-9 5-9-5V32z" strokeWidth="2.600" />
            <circle cx="40" cy="37" r="3" fill="#555" stroke="none" />
          </svg>
        </Round>
        <Field>
          <Placeholder>弹幕走一波…</Placeholder>
          <Send>
            <svg width="50" height="48" viewBox="0 0 50 48">
              <text x="0" y="34" fontSize="39" fontWeight="900" fill="#e35b10" stroke="#e35b10" strokeWidth="0.800">弹</text>
              <circle cx="39" cy="37" r="10.500" fill="#e35b10" stroke="#fff" strokeWidth="1.500" />
              <path d="M34 37l4 4 6.500-7" fill="none" stroke="#fff" strokeWidth="2.400" />
            </svg>
          </Send>
        </Field>
      </Danmaku>
      <Banner>
        <svg width="43" height="38" viewBox="0 0 43 38" fill="#e8590c">
          <rect x="0" y="12" width="5" height="14" />
          <path d="M8 12h6L42 1v36l-14-6-2 4-5-2-2 1-3-6-8-2z" />
        </svg>
        <BannerText>
          深交所主办<Comma>，</Comma>好礼惊喜享不停<Comma>，</Comma>创造你的投资传奇<Chevrons>&gt;&gt;</Chevrons>
        </BannerText>
        <Bar />
        <svg width="32" height="32" viewBox="0 0 32 32"><path d="M2 2l28 28M30 2L2 30" stroke="#dd6a2c" strokeWidth="2.800" /></svg>
      </Banner>

      <Tabs>
        <TabItem $on><TabText>股吧</TabText></TabItem>
        <TabItem><TabText>资讯</TabText></TabItem>
        <TabItem><TabText>公告</TabText></TabItem>
        <TabItem><TabText>资金</TabText></TabItem>
        <TabItem><TabText>持仓</TabText></TabItem>
        <TabItem><TabText>资料</TabText></TabItem>
      </Tabs>

      <Cards>
        <Card $bg="linear-gradient(180deg,#fef0ef,#fff6f4)">
          <Ghost>
            <svg width="225" height="160" viewBox="0 0 225 160">
              <rect width="225" height="160" fill="#feedeb" />
              <path d="M42 38h52v22H84v100H58V66H42zM110 160V70q0-32 40-32h30q45 0 45 40v82h-30V80q0-14-14-14h-26q-14 0-14 14v80z" fill="#fff3f1" />
            </svg>
          </Ghost>
          <svg width="44" height="44" viewBox="0 0 44 44">
            <circle cx="22" cy="22" r="22" fill="#da5350" />
            <path d="M9 40V25h6V15h14v14h6v11z" fill="#fff" />
            <text x="22" y="31" fontSize="15" fontWeight="700" textAnchor="middle" fill="#da5350">1</text>
          </svg>
          <CardTitle>ETF人气榜</CardTitle>
          <svg width="14" height="44" viewBox="0 0 14 44"><path d="M1 12l9 11-9 11" fill="none" stroke="#999" strokeWidth="2.400" /></svg>
        </Card>
        <Card $bg="#fefbec">
          <Ghost>
            <svg width="145" height="160" viewBox="0 0 145 160"><path d="M0 70q10-38 32-40 22 2 32 40v90H0z" fill="#faf0dc" /></svg>
          </Ghost>
          <svg width="44" height="44" viewBox="0 0 44 44">
            <circle cx="22" cy="22" r="22" fill="#d19a57" />
            <path d="M7 17l7 4 8-12 8 12 7-4-2 24H9z" fill="#fff" />
            <text x="22" y="30" fontSize="9" fontWeight="700" textAnchor="middle" fill="#d19a57">超级</text>
          </svg>
          <CardTitle>超级ETF</CardTitle>
          <svg width="14" height="44" viewBox="0 0 14 44"><path d="M1 12l9 11-9 11" fill="none" stroke="#999" strokeWidth="2.400" /></svg>
        </Card>
        <Card $bg="#fef3f2">
          <svg width="44" height="44" viewBox="0 0 44 44">
            <circle cx="22" cy="22" r="22" fill="#da5350" />
            <text x="22" y="31" fontSize="18" fontWeight="800" textAnchor="middle" fill="#fff">ETF</text>
          </svg>
          <CardTitle>ETF</CardTitle>
        </Card>
      </Cards>

      <Bottom>
        <IndexBox>
          <IndexTri><Tri $up $w={21} $h={8} $c="#777" /></IndexTri>
          <IndexValue>3894.46</IndexValue>
          <IndexRow>
            <Label $s={45}>上证</Label>
            <Value $s={34} $ls={-1.6} $c={C.green}>−1.00%</Value>
          </IndexRow>
        </IndexBox>
        {NAV.map((n) => <NavItem key={n.t}>{n.i}{n.t}</NavItem>)}
      </Bottom>
      <Home><Handle /></Home>
    </Page>
  );
}
